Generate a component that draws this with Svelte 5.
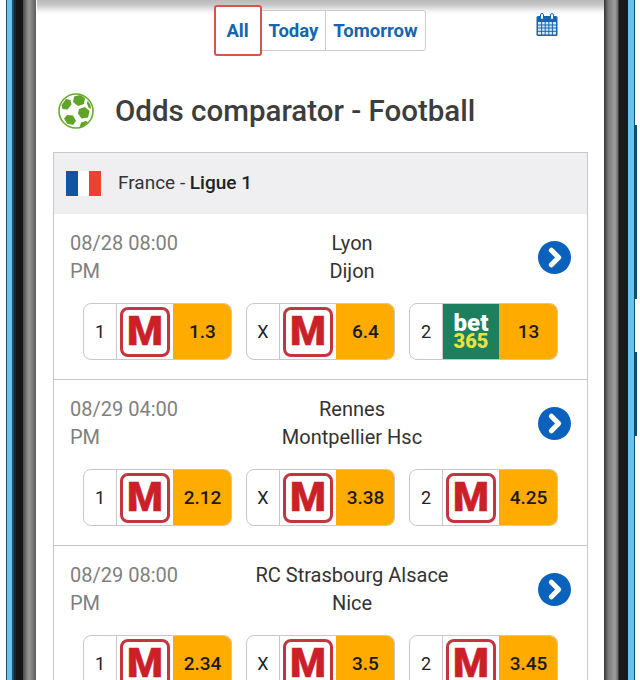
<script>
  const matches = [
    { date: '08/28 08:00 PM', home: 'Lyon', away: 'Dijon', odds: [['1', 'm', '1.3'], ['X', 'm', '6.4'], ['2', 'bet', '13']] },
    { date: '08/29 04:00 PM', home: 'Rennes', away: 'Montpellier Hsc', odds: [['1', 'm', '2.12'], ['X', 'm', '3.38'], ['2', 'm', '4.25']] },
    { date: '08/29 08:00 PM', home: 'RC Strasbourg Alsace', away: 'Nice', odds: [['1', 'm', '2.34'], ['X', 'm', '3.5'], ['2', 'm', '3.45']] }
  ];
</script>

<div class="frame">
  <div class="bezel left"></div>
  <main class="screen">
    <div class="topshade"></div>
    <div class="filters">
      <div class="tabs">
        <button class="tab active">All</button>
        <button class="tab">Today</button>
        <button class="tab">Tomorrow</button>
      </div>
      <svg class="calendar" viewBox="0 0 22 24" width="22" height="24" aria-hidden="true">
        <rect x="0.5" y="3" width="21" height="20" rx="1.5" fill="#1565b0" />
        <rect x="2" y="9" width="18" height="12.5" fill="#dbe8f5" />
        <path d="M2 12h18M2 15h18M2 18.300h18M5.600 9v13M9.200 9v13M12.800 9v13M16.400 9v13" stroke="#1565b0" stroke-width="1" />
        <rect x="4.500" y="0.500" width="3" height="6" rx="1.500" fill="#fff" stroke="#1565b0" />
        <rect x="14.500" y="0.500" width="3" height="6" rx="1.500" fill="#fff" stroke="#1565b0" />
      </svg>
    </div>

    <h1>
      <svg class="ball" viewBox="0 0 36 36" width="36" height="36" aria-hidden="true">
        <circle cx="18" cy="18" r="17" fill="#fff" stroke="#6aaa2c" stroke-width="1.600" />
        <path d="M16 3.500l6-1.500 5 3-1 6-6 2-5-4z" fill="#5fa328" />
        <path d="M8 6l4.500 1 1 4.500-4 5-5-.5 -1-4z" fill="#5fa328" />
        <path d="M21 16l6-2 4.500 4-1.500 6.500-6.500 1-3.500-5z" fill="#5fa328" />
        <path d="M9 22l6 .5 3 5.500-3 4-6-1.500-3-5z" fill="#5fa328" />
        <path d="M23 29.500l5-1.500 2 1-5 4.500-3.500 1z" fill="#5fa328" />
        <path d="M29.500 7.500l3 4.500.5 4-2.500-1.500-1.500-4z" fill="#5fa328" />
      </svg>
      Odds comparator - Football
    </h1>

    <section class="board">
      <header class="league">
        <span class="flag"><i class="blue"></i><i class="white"></i><i class="red"></i></span>
        <span class="title">France - <b>Ligue 1</b></span>
      </header>

      {#each matches as match}
        <article class="match">
          <div class="info">
            <div class="date">{match.date}</div>
            <div class="teams">
              <div>{match.home}</div>
              <div>{match.away}</div>
            </div>
            <svg class="go" viewBox="0 0 32 32" width="33" height="33" aria-hidden="true">
              <circle cx="16" cy="16" r="16" fill="#0b62bd" />
              <path d="M13 9l7 7-7 7" fill="none" stroke="#fff" stroke-width="5" stroke-linejoin="round" stroke-linecap="round" />
            </svg>
          </div>
          <div class="odds">
            {#each match.odds as [label, book, value]}
              <div class="odd">
                <span class="label">{label}</span>
                {#if book === 'bet'}
                  <span class="book bet"><b>bet</b><b class="yellow">365</b></span>
                {:else}
                  <span class="book"><span class="mark">M</span></span>
                {/if}
                <span class="value">{value}</span>
              </div>
            {/each}
          </div>
        </article>
      {/each}
    </section>
  </main>
  <div class="bezel right">
    <i class="key volume"></i>
    <i class="key power"></i>
  </div>
</div>

<style>
  :global(body) {
    margin: 0;
    background: #fff;
  }

  .frame {
    display: flex;
    width: 640px;
    height: 680px;
    overflow: hidden;
    font-family: Roboto, "Liberation Sans", sans-serif;
  }

  .bezel {
    position: relative;
    flex: none;
  }

  .left {
    width: 37px;
    background: linear-gradient(90deg, #fff 0 6px, #16506b 6px 7px, #62c6ee 7px 12px, #17506b 12px 14px, #17262d 14px 16px, #151515 16px 23px, #4a4a4a 23px, #999 29px, #5c5c5c 36px, #fff 36px);
  }

  .right {
    width: 36px;
    background: linear-gradient(90deg, #333 0, #777 4px, #a0a0a0 11px, #666 14px, #1a1a1a 15px 24px, #62c6ee 24px 30px, #16506b 30px 31px, #fff 31px);
  }

  .key {
    position: absolute;
    left: 30px;
    width: 3px;
    background: #0f4e6e;
  }

  .volume {
    top: 125px;
    height: 174px;
  }

  .power {
    top: 352px;
    height: 84px;
  }

  .screen {
    position: relative;
    flex: 1;
    min-width: 0;
    padding: 0 16px;
    background: #fff;
  }

  .topshade {
    position: absolute;
    top: 0;
    left: 0;
    right: 0;
    height: 15px;
    background: linear-gradient(#b9b9b9, #c9c9c9 35%, #f4f4f4 75%, #fff);
  }

  .filters {
    position: relative;
    display: flex;
    justify-content: center;
    padding-top: 5px;
  }

  .tabs {
    display: flex;
    align-items: center;
    margin-right: 1px;
  }

  .tab {
    height: 41px;
    padding: 0 7px;
    margin-left: -1px;
    border: 1px solid #ccc;
    border-radius: 0;
    background: #fff;
    color: #1565b0;
    font: 700 18.500px Roboto, "Liberation Sans", sans-serif;
  }

  .tab:last-child {
    padding-right: 8px;
    border-radius: 0 3px 3px 0;
  }

  .tab.active {
    position: relative;
    height: 51px;
    width: 48px;
    margin: 0;
    padding: 0;
    border: 2px solid #d9534a;
    border-radius: 3px;
  }

  .calendar {
    position: absolute;
    top: 13px;
    right: 30px;
  }

  h1 {
    display: flex;
    align-items: center;
    gap: 21px;
    margin: 37px 0 23px;
    color: #3d3d3d;
    font-size: 29.500px;
    font-weight: 500;
    line-height: 36px;
  }

  .ball {
    margin-left: 5px;
  }

  .board {
    border: 1px solid #c8c8c8;
    border-bottom: 0;
  }

  .league {
    display: flex;
    align-items: center;
    gap: 17px;
    height: 61px;
    padding-left: 12px;
    background: #efeff1;
    color: #333;
    font-size: 19px;
  }

  .league b {
    font-weight: 500;
    color: #222;
  }

  .title {
    margin-bottom: 2px;
  }

  .flag {
    display: flex;
    width: 35px;
    height: 25px;
  }

  .flag i {
    flex: 1;
  }

  .blue { background: #0f55a3; }
  .white { background: #fff; }
  .red { background: #ee4035; }

  .match {
    box-sizing: border-box;
    height: 166px;
    padding: 15px 16px 0;
    border-bottom: 1px solid #c8c8c8;
  }

  .info {
    display: grid;
    grid-template-columns: 112px 340px 1fr;
    align-items: center;
    height: 56px;
    font-size: 20px;
    line-height: 28px;
  }

  .date {
    color: #808080;
  }

  .teams {
    text-align: center;
    color: #333;
  }

  .go {
    justify-self: end;
    margin-top: 1px;
  }

  .odds {
    display: flex;
    gap: 14px;
    justify-content: center;
    margin-top: 18px;
  }

  .odd {
    display: flex;
    width: 149px;
    height: 57px;
    box-sizing: border-box;
    border: 1px solid #c8c8c8;
    border-radius: 8px;
    overflow: hidden;
  }

  .label {
    width: 32px;
    display: flex;
    align-items: center;
    justify-content: center;
    border-right: 1px solid #c8c8c8;
    color: #222;
    font-size: 18px;
  }

  .book {
    width: 56px;
    display: flex;
    align-items: center;
    justify-content: center;
  }

  .mark {
    display: flex;
    align-items: center;
    justify-content: center;
    width: 50px;
    height: 50px;
    box-sizing: border-box;
    border: 3px solid #c3353f;
    border-radius: 8px;
    color: #cc2029;
    font-size: 41px;
    font-weight: 900;
    line-height: 1;
    -webkit-text-stroke: 0.5px #cc2029;
  }

  .bet {
    flex-direction: column;
    background: #1c7f5d;
    color: #fff;
    font-size: 24px;
    line-height: 18px;
  }

  .bet b {
    font-weight: 900;
  }

  .yellow {
    color: #e8e33c;
    font-size: 20px;
  }

  .value {
    flex: 1;
    display: flex;
    align-items: center;
    justify-content: center;
    margin: -1px -1px -1px 0;
    background: #ffab00;
    color: #1a1a1a;
    font-size: 19px;
    font-weight: 500;
  }
</style>
